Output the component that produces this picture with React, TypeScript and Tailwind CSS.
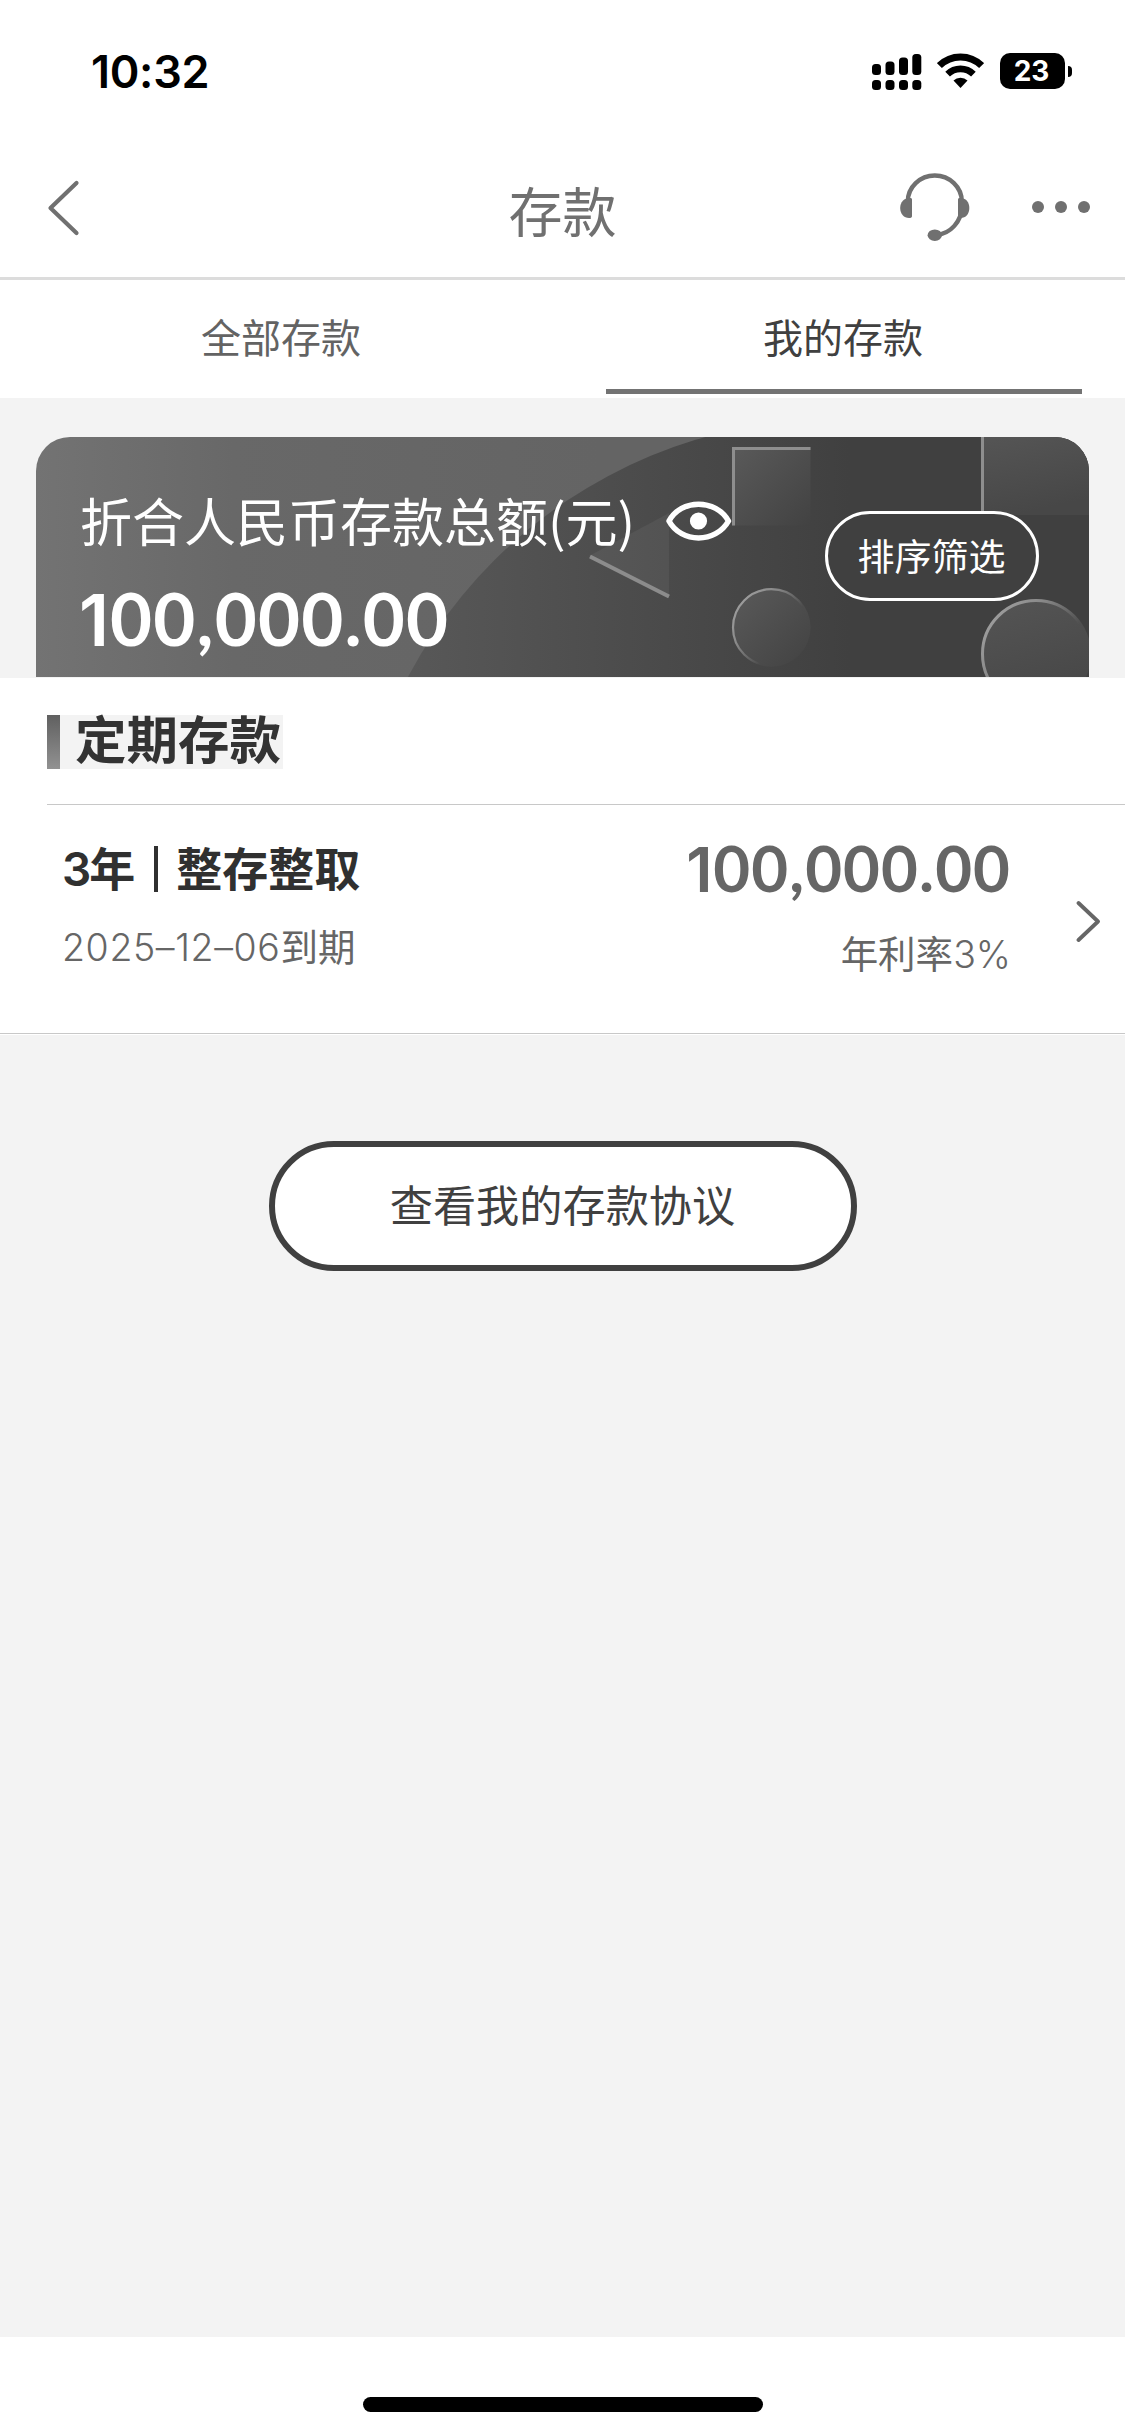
import React from 'react'

const StatusBar = () => {
  return (
    <div className="flex h-[142px] items-start justify-between pl-[91px] pr-[53px] text-black">
      <span className="mt-[49px] font-['Inter',sans-serif] text-[45px] font-semibold leading-none tracking-[-0.3px]">10:32</span>
      <div className="mt-[52px] flex items-center">
        <svg width="50" height="38" viewBox="0 0 50 38" fill="currentColor">
          <rect x="0" y="12" width="9" height="11" rx="3.5" />
          <rect x="13.5" y="9.5" width="9" height="13.5" rx="3.5" />
          <rect x="27" y="5.5" width="9" height="17.5" rx="3.5" />
          <rect x="40.3" y="2" width="9" height="21" rx="3.5" />
          <rect x="0" y="28" width="9" height="10" rx="3.5" />
          <rect x="13.5" y="28" width="9" height="10" rx="3.5" />
          <rect x="27" y="28" width="9" height="10" rx="3.5" />
          <rect x="40.3" y="28" width="9" height="10" rx="3.5" />
        </svg>
        <svg className="ml-[15px]" width="47" height="38" viewBox="0 0 47 38" fill="none" stroke="currentColor">
          <path d="M2.4 13.6a30 30 0 0 1 42.2 0" strokeWidth="7" />
          <path d="M10.6 22.2a18.4 18.4 0 0 1 25.8 0" strokeWidth="6.6" />
          <path d="M23.5 36l-7-7.4a10 10 0 0 1 14 0z" fill="currentColor" stroke="none" />
        </svg>
        <div className="ml-4 flex h-9 w-[65px] items-center justify-center rounded-[10px] bg-black pr-[2px] font-['Inter',sans-serif] text-[28px] font-bold leading-none text-white">23</div>
        <div className="ml-[3px] h-[11px] w-1 rounded-r-full bg-black" />
      </div>
    </div>
  )
}

const Header = () => {
  return (
    <header className="grid h-[138px] grid-cols-[1fr_auto_1fr] items-start border-b-[3px] border-[#dcdcdc] text-[#707070]">
      <div className="flex pl-[47px] pt-[38px]">
        <svg width="34" height="56" viewBox="0 0 34 56" fill="none" stroke="currentColor" strokeWidth="4.2" strokeLinecap="round" strokeLinejoin="round">
          <path d="M29.5 3L3.5 28l26 25" />
        </svg>
      </div>
      <h1 className="mt-[41px] font-['Noto_Sans_CJK_SC',sans-serif] text-[54px] leading-none">存款</h1>
      <div className="flex items-center justify-end pr-[35px] pt-[30px]">
        <svg width="70" height="70" viewBox="0 0 70 70" fill="none" stroke="currentColor" strokeWidth="4.4">
          <path d="M7.8 32v-2.5a27 26 0 0 1 54 0V34A27.5 29 0 0 1 36 63" />
          <path d="M12 27.5c0-1.2-1-1.5-2-1.5C4 26 .2 30 .2 36S4 46 9 46c2 0 3-.6 3-2z" fill="currentColor" stroke="none" />
          <path d="M58 27.5c0-1.2 1-1.5 2-1.5 6 0 9.3 4 9.3 10S66 46 60.5 46c-1.5 0-2.500-.6-2.500-2z" fill="currentColor" stroke="none" />
          <ellipse cx="34.8" cy="63.2" rx="7.2" ry="5.8" fill="currentColor" stroke="none" />
        </svg>
        <div className="ml-[62px] flex gap-[11.5px]">
          <span className="size-[11.6px] rounded-full bg-current" />
          <span className="size-[11.6px] rounded-full bg-current" />
          <span className="size-[11.6px] rounded-full bg-current" />
        </div>
      </div>
    </header>
  )
}

const Tabs = () => {
  return (
    <nav className="flex h-[118px] bg-white font-['Noto_Sans_CJK_SC',sans-serif] text-[40px] leading-none">
      <button className="flex flex-1 justify-center pr-px pt-[36px] leading-none text-[#636363]">全部存款</button>
      <button className="flex flex-1 flex-col items-center pt-[36px] leading-none text-[#404040]">
        <span className="mr-[2px]">我的存款</span>
        <span className="mt-[33px] h-[5px] w-[476px] bg-[#737373]" />
      </button>
    </nav>
  )
}

// Decorative shapes behind the balance
const CardBackground = () => {
  return (
    <svg className="absolute inset-0" width="1053" height="240" viewBox="36 437 1053 240">
      <defs>
        <linearGradient id="base" x1="36" x2="600" y1="0" y2="0" gradientUnits="userSpaceOnUse">
          <stop offset="0" stopColor="#737373" />
          <stop offset="0.35" stopColor="#686868" />
          <stop offset="1" stopColor="#646464" />
        </linearGradient>
        <linearGradient id="disc" x1="408" x2="850" y1="0" y2="0" gradientUnits="userSpaceOnUse">
          <stop offset="0" stopColor="#585858" />
          <stop offset="1" stopColor="#404040" />
        </linearGradient>
        <linearGradient id="shape" x1="0" x2="1" y1="0" y2="1">
          <stop offset="0" stopColor="#5a5a5a" />
          <stop offset="1" stopColor="#424242" />
        </linearGradient>
        <linearGradient id="wide" x1="0" x2="0.3" y1="0" y2="1">
          <stop offset="0" stopColor="#555555" />
          <stop offset="1" stopColor="#474747" />
        </linearGradient>
        <linearGradient id="edge" x1="0" x2="0.75" y1="0.2" y2="0.75">
          <stop offset="0" stopColor="#a0a0a0" />
          <stop offset="0.35" stopColor="#8a8a8a" />
          <stop offset="0.8" stopColor="#8a8a8a" stopOpacity="0" />
        </linearGradient>
      </defs>
      <rect x="36" y="437" width="1053" height="240" fill="url(#base)" />
      <circle cx="836" cy="903" r="484" fill="url(#disc)" />
      <rect x="850" y="437" width="239" height="240" fill="#404040" />
      <path d="M589 556L669 513v85z" fill="#fff" fillOpacity="0.05" />
      <path d="M590 556.5L669 596.5" stroke="#8c8c8c" strokeWidth="4" />
      <rect x="732" y="447" width="78.5" height="78.5" fill="url(#shape)" />
      <path d="M733.5 525.5v-77h77" fill="none" stroke="#8e8e8e" strokeWidth="3" />
      <rect x="981" y="437" width="108" height="78" fill="url(#wide)" />
      <path d="M982.5 437v78" stroke="#8e8e8e" strokeWidth="3" />
      <circle cx="771.3" cy="627.5" r="39.3" fill="url(#shape)" />
      <circle cx="771.3" cy="627.5" r="38.3" fill="none" stroke="url(#edge)" strokeWidth="2.2" />
      <circle cx="1036" cy="654" r="55" fill="url(#wide)" />
      <circle cx="1036" cy="654" r="53.5" fill="none" stroke="url(#edge)" strokeWidth="3" />
    </svg>
  )
}

const BalanceCard = () => {
  return (
    <section className="relative mx-9 mb-px mt-[39px] h-60 overflow-hidden rounded-t-[34px] text-white">
      <CardBackground />
      <div className="relative flex justify-between pl-[44px] pr-[50px]">
        <div className="pt-[57px]">
          <div className="flex items-center">
            <span className="whitespace-nowrap font-['Noto_Sans_CJK_SC',sans-serif] text-[52px] leading-none">折合人民币存款总额(元)</span>
            <svg className="ml-[31px] mt-px" width="66" height="42" viewBox="0 0 66 42" fill="none">
              <path d="M3 21C15-1.5 50-1.5 62.5 21C50 43.5 15 43.5 3 21z" stroke="white" strokeWidth="5.5" strokeLinejoin="round" />
              <circle cx="32.5" cy="21" r="8.6" fill="white" />
            </svg>
          </div>
          <div className="-ml-px mt-[36px] h-[72px] font-['Lato',sans-serif] text-[72.5px] font-bold leading-[72px] tracking-[1.2px]">
            <span className="font-['Inter',sans-serif] text-[71px] font-semibold leading-none tracking-[1px]">1</span>00,000.00
          </div>
        </div>
        <button className="mt-[74px] flex h-[90px] w-[214px] justify-center rounded-full border-[3px] border-white bg-[#404040] pr-px pt-[23px] font-['Noto_Sans_CJK_SC',sans-serif] text-[37px] leading-none">排序筛选</button>
      </div>
    </section>
  )
}

const DepositList = () => {
  return (
    <section className="bg-white pb-px">
      <div className="h-[356px] border-b border-[#c8c8c8]">
        <div className="ml-[47px] flex h-[127px] items-start border-b border-[#c8c8c8] pt-[37px]">
          <span className="h-[54px] w-[13px] bg-linear-to-b from-[#606060] to-[#929292]" />
          <h2 className="h-[54px] w-[223px] whitespace-nowrap bg-[#f3f3f3] pl-[15px] font-['Noto_Sans_CJK_SC',sans-serif] text-[51.5px] font-bold leading-[44px] text-[#333333]">定期存款</h2>
        </div>
        <div className="flex items-start pl-[62px] pr-[24px]">
          <div className="flex-1 font-['Inter','Noto_Sans_CJK_SC',sans-serif]">
            <div className="mt-[41px] flex h-[46px] items-center text-[46px] font-bold leading-none text-[#303030]">
              <span><span className="font-semibold tracking-[-2px]">3</span>年</span>
              <span className="ml-[19px] mr-[18px] h-[46px] w-1 bg-[#303030]" />
              <span>整存整取</span>
            </div>
            <div className="mt-[37px] text-[37.5px] leading-none text-[#666666]">
              <span className="font-light tracking-[0.6px]">2025–12–06</span>到期
            </div>
          </div>
          <div className="flex flex-col items-end text-[#666666]">
            <div className="mt-[31px] h-[63px] font-['Lato',sans-serif] text-[63.5px] font-bold leading-[63px] tracking-[1.1px]">
              <span className="font-['Inter',sans-serif] text-[62px] font-semibold leading-none tracking-[1px]">1</span>00,000.00
            </div>
            <div className="mt-[37px] font-['Inter','Noto_Sans_CJK_SC',sans-serif] text-[37.5px] leading-none">年利率<span className="font-light">3%</span></div>
          </div>
          <svg className="ml-[64px] mt-[95px]" width="26" height="42" viewBox="0 0 26 42" fill="none" stroke="#666666" strokeWidth="3.8" strokeLinecap="round" strokeLinejoin="round">
            <path d="M3.5 3L23 21.5L3.5 40" />
          </svg>
        </div>
      </div>
    </section>
  )
}

const App = () => {
  return (
    <div className="flex h-[2435px] w-[1125px] flex-col overflow-hidden bg-white">
      <StatusBar />
      <Header />
      <Tabs />
      <main className="flex-1 bg-[#f3f3f3]">
        <div className="flow-root">
          <BalanceCard />
        </div>
        <DepositList />
        <button className="mx-auto mt-[106px] flex h-[130px] w-[588px] justify-center rounded-full border-[6px] border-[#404040] bg-white pt-[35px] font-['Noto_Sans_CJK_SC',sans-serif] text-[43.2px] leading-none text-[#404040]">查看我的存款协议</button>
      </main>
      <footer className="flex h-[98px] justify-center bg-white pt-[60px]">
        <div className="h-[15px] w-[400px] rounded-full bg-black" />
      </footer>
    </div>
  )
}

export default App
